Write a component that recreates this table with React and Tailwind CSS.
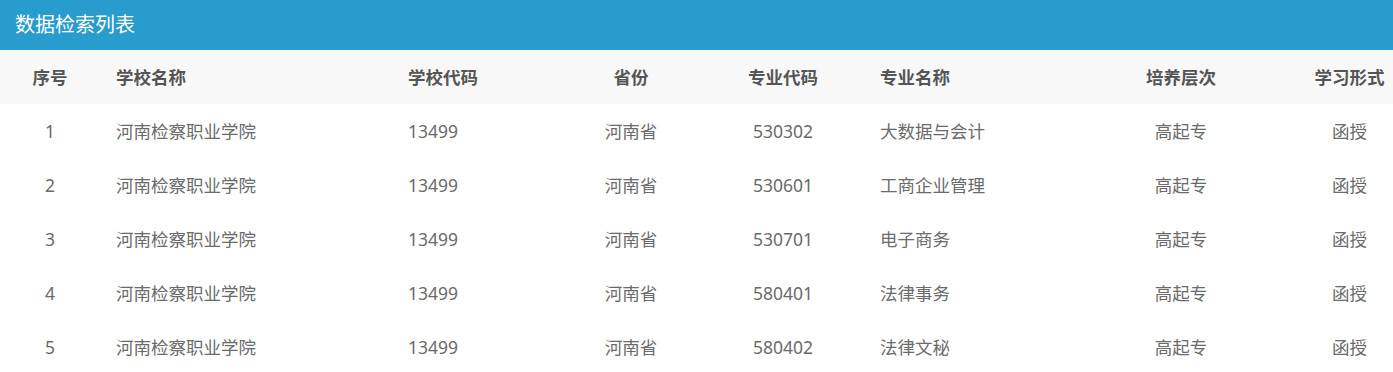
const rows = [
  { no: 1, school: '河南检察职业学院', code: '13499', prov: '河南省', majorCode: '530302', major: '大数据与会计', level: '高起专', mode: '函授' },
  { no: 2, school: '河南检察职业学院', code: '13499', prov: '河南省', majorCode: '530601', major: '工商企业管理', level: '高起专', mode: '函授' },
  { no: 3, school: '河南检察职业学院', code: '13499', prov: '河南省', majorCode: '530701', major: '电子商务', level: '高起专', mode: '函授' },
  { no: 4, school: '河南检察职业学院', code: '13499', prov: '河南省', majorCode: '580401', major: '法律事务', level: '高起专', mode: '函授' },
  { no: 5, school: '河南检察职业学院', code: '13499', prov: '河南省', majorCode: '580402', major: '法律文秘', level: '高起专', mode: '函授' },
];

// column widths tuned to the reference
const grid = 'grid grid-cols-[100px_292px_168px_142px_162px_216px_202px_111px]';

export default function App() {
  return (
    <div className="w-[1393px] h-[372px] overflow-hidden bg-white font-['Noto_Sans','Noto_Sans_CJK_SC',sans-serif]">
      <div className="h-[50px] bg-[#279ccd] flex items-center px-[15px]">
        <h2 className="text-[20px] text-white">数据检索列表</h2>
      </div>

      <div className={`${grid} h-[54px] items-center bg-[#f8f8f8] text-[17.5px] font-bold text-[#555]`}>
        <div className="text-center">序号</div>
        <div className="pl-4">学校名称</div>
        <div className="pl-4">学校代码</div>
        <div className="text-center">省份</div>
        <div className="text-center">专业代码</div>
        <div className="pl-4">专业名称</div>
        <div className="text-center">培养层次</div>
        <div className="text-center pl-6">学习形式</div>
      </div>

      {rows.map(r => (
        <div key={r.no} className={`${grid} h-[54px] items-center text-[17.5px] text-[#6b6b6b]`}>
          <div className="text-center">{r.no}</div>
          <div className="pl-4">{r.school}</div>
          <div className="pl-4">{r.code}</div>
          <div className="text-center">{r.prov}</div>
          <div className="text-center">{r.majorCode}</div>
          <div className="pl-4">{r.major}</div>
          <div className="text-center">{r.level}</div>
          <div className="text-center pl-6">{r.mode}</div>
        </div>
      ))}
    </div>
  );
}
